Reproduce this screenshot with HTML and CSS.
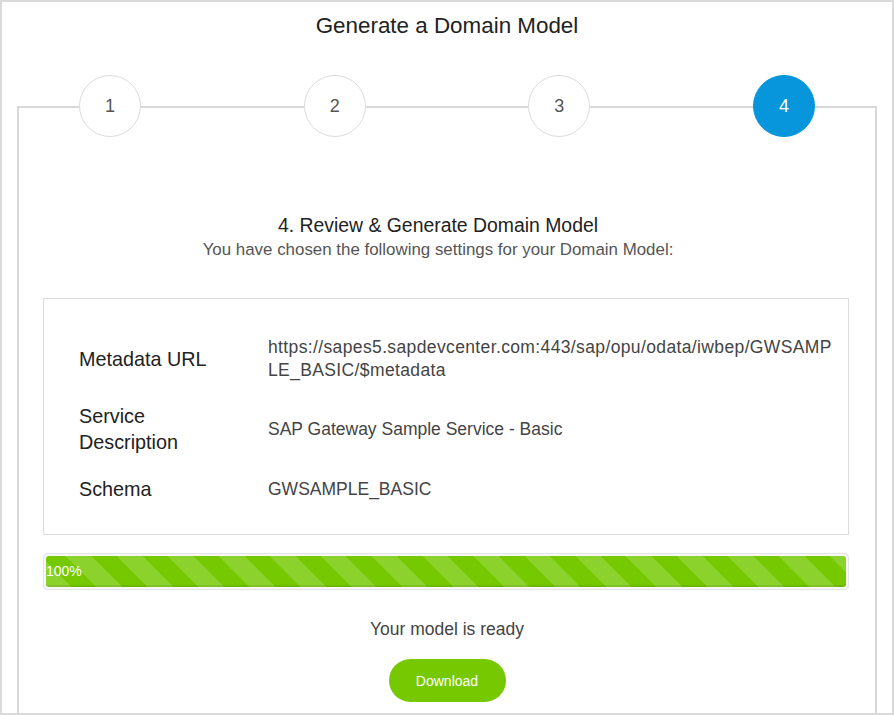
FILE: index.html
```html
<!DOCTYPE html>
<html>
<head>
<meta charset="utf-8">
<link rel="stylesheet" href="styles.css">
</head>
<body>
<div class="frame">
  <h1 class="title">Generate a Domain Model</h1>
  <div class="wizard">
    <div class="steps">
      <div class="step">1</div>
      <div class="step">2</div>
      <div class="step">3</div>
      <div class="step step-active">4</div>
    </div>
    <div class="review">
      <h2 class="review-title">4. Review &amp; Generate Domain Model</h2>
      <p class="review-sub">You have chosen the following settings for your Domain Model:</p>
    </div>
    <div class="details">
      <div class="label">Metadata URL</div>
      <div class="value value-url">https://sapes5.sapdevcenter.com:443/sap/opu/odata/iwbep/GWSAMPLE_BASIC/$metadata</div>
      <div class="label">Service Description</div>
      <div class="value">SAP Gateway Sample Service - Basic</div>
      <div class="label">Schema</div>
      <div class="value">GWSAMPLE_BASIC</div>
    </div>
    <div class="progress">
      <div class="progress-bar" style="width: 100%">100%</div>
    </div>
    <p class="ready">Your model is ready</p>
    <div class="actions">
      <button class="download">Download</button>
    </div>
  </div>
</div>
</body>
</html>
```

FILE: styles.css
```css
html, body {
  margin: 0;
  padding: 0;
  background: #fff;
}

.frame {
  box-sizing: border-box;
  width: 894px;
  height: 715px;
  border: 2px solid #dadada;
  overflow: hidden;
  padding-top: 11px;
  font-family: "Liberation Sans", Arial, sans-serif;
}

.title {
  margin: 0;
  font-size: 22.4px;
  line-height: 26px;
  font-weight: normal;
  color: #222;
  text-align: center;
}

.wizard {
  margin: 67px 15px 0 15px;
  border: 2px solid #d8d8d8;
  border-bottom: none;
  height: 700px;
}

.steps {
  display: flex;
  justify-content: space-between;
  padding: 0 60px;
  margin-top: -33px;
}

.step {
  box-sizing: border-box;
  width: 62px;
  height: 62px;
  border-radius: 50%;
  border: 1px solid #dcdcdc;
  background: #fff;
  display: flex;
  align-items: center;
  justify-content: center;
  font-size: 18px;
  color: #555;
}

.step-active {
  background: #0796db;
  border-color: #0796db;
  color: #fff;
}

.review {
  text-align: center;
  margin-top: 76px;
  padding-right: 18px;
}

.review-title {
  margin: 0;
  font-size: 19.4px;
  line-height: 24px;
  font-weight: normal;
  color: #222;
}

.review-sub {
  margin: 1px 0 0 0;
  font-size: 16.9px;
  line-height: 24px;
  color: #555;
}

.details {
  margin: 36px 26px 0 24px;
  border: 1px solid #dcdcdc;
  padding: 37px 14px 32px 35px;
  display: grid;
  grid-template-columns: 189px 1fr;
  row-gap: 21px;
  align-items: center;
}

.label {
  font-size: 19.8px;
  line-height: 26px;
  color: #222;
  padding-right: 30px;
}

.value {
  font-size: 17.5px;
  line-height: 23px;
  color: #444;
}

.value-url {
  word-break: break-all;
  letter-spacing: 0.37px;
}

.progress {
  margin: 18px 26px 0 24px;
  border: 1px solid #e4e4e4;
  border-radius: 4px;
  padding: 2px;
  background: #f7f7f7;
}

.progress-bar {
  box-sizing: border-box;
  height: 31px;
  border-radius: 3px;
  background-color: #76c800;
  background-image: repeating-linear-gradient(45deg, #8bd22c 0 18px, #76c800 18px 36px);
  box-shadow: inset 0 -2px 0 rgba(0, 0, 0, 0.08);
  color: #fff;
  font-size: 14px;
  line-height: 31px;
  padding-left: 0;
}

.ready {
  margin: 29px 0 0 0;
  text-align: center;
  font-size: 17.5px;
  line-height: 20px;
  color: #444;
}

.actions {
  display: flex;
  justify-content: center;
  margin-top: 20px;
}

.download {
  width: 117px;
  height: 43px;
  border: none;
  border-radius: 22px;
  background: #76c800;
  color: #fff;
  font-family: "Liberation Sans", Arial, sans-serif;
  font-size: 14px;
  padding: 0;
}
```
